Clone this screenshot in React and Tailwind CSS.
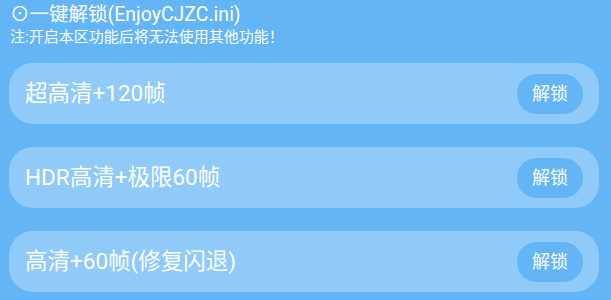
export default function App() {
  const items = ["超高清+120帧", "HDR高清+极限60帧", "高清+60帧(修复闪退)"];
  return (
    <div
      className="w-[611px] h-[300px] overflow-hidden bg-[#64b5f6] text-white"
      style={{ fontFamily: "Roboto, 'Noto Sans CJK SC', sans-serif" }}
    >
      <div className="pl-[10px] pt-[2px]">
        <div className="text-[19.5px] leading-[25px]">⊙一键解锁(EnjoyCJZC.ini)</div>
        <div className="text-[15px] leading-[18px] mt-[1px]">注:开启本区功能后将无法使用其他功能！</div>
      </div>
      <div className="flex flex-col gap-[23px] pl-[9px] pr-[12px] mt-[17px]">
        {items.map((t) => (
          <div
            key={t}
            className="h-[61px] rounded-[24px] bg-[#90caf9] flex items-center justify-between pl-[16px] pr-[16px]"
          >
            <span className="text-[22.5px]">{t}</span>
            <button className="w-[66px] h-[40px] rounded-[20px] bg-[#64b5f6] text-white text-[18px]">
              解锁
            </button>
          </div>
        ))}
      </div>
    </div>
  );
}
